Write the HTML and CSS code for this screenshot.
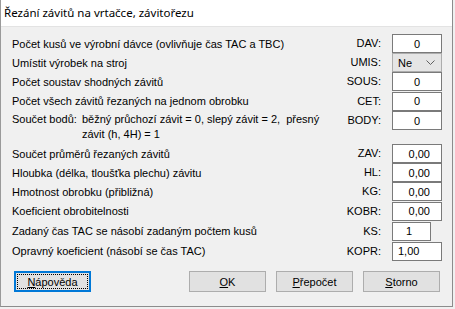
FILE: index.html
```html
<!DOCTYPE html>
<html lang="cs">
<head>
  <meta charset="UTF-8">
  <title>Řezání závitů na vrtačce, závitořezu</title>
  <link rel="stylesheet" href="styles.css">
</head>
<body>
  <div class="window">
    <div class="titlebar">Řezání závitů na vrtačce, závitořezu</div>
    <div class="client">
      <div class="form">
        <div class="row h19">
          <span class="label">Počet kusů ve výrobní dávce (ovlivňuje čas TAC a TBC)</span>
          <span class="code">DAV:</span>
          <input class="box center" value="0">
        </div>
        <div class="row h19">
          <span class="label">Umístit výrobek na stroj</span>
          <span class="code">UMIS:</span>
          <div class="select">
            <span>Ne</span>
            <svg width="9" height="5" viewBox="0 0 9 5"><polyline points="0.5,0.5 4.5,4.5 8.5,0.5" fill="none" stroke="#606060" stroke-width="1"/></svg>
          </div>
        </div>
        <div class="row h19">
          <span class="label">Počet soustav shodných závitů</span>
          <span class="code">SOUS:</span>
          <input class="box center" value="0">
        </div>
        <div class="row h20">
          <span class="label">Počet všech závitů řezaných na jednom obrobku</span>
          <span class="code">CET:</span>
          <input class="box center" value="0">
        </div>
        <div class="row tall">
          <span class="label split">
            <span class="lead">Součet bodů:</span>
            <span class="desc">běžný průchozí závit = 0, slepý závit = 2,&nbsp; přesný<br>závit (h, 4H) = 1</span>
          </span>
          <span class="code">BODY:</span>
          <input class="box center" value="0">
        </div>
        <div class="row h19">
          <span class="label">Součet průměrů řezaných závitů</span>
          <span class="code">ZAV:</span>
          <input class="box num" value="0,00">
        </div>
        <div class="row h19">
          <span class="label">Hloubka (délka, tloušťka plechu) závitu</span>
          <span class="code">HL:</span>
          <input class="box num" value="0,00">
        </div>
        <div class="row h19">
          <span class="label">Hmotnost obrobku (přibližná)</span>
          <span class="code">KG:</span>
          <input class="box num" value="0,00">
        </div>
        <div class="row h20">
          <span class="label">Koeficient obrobitelnosti</span>
          <span class="code">KOBR:</span>
          <input class="box num" value="0,00">
        </div>
        <div class="row h20">
          <span class="label">Zadaný čas TAC se násobí zadaným počtem kusů</span>
          <span class="code">KS:</span>
          <div class="field-slot"><input class="box short" value="1"></div>
        </div>
        <div class="row h20">
          <span class="label">Opravný koeficient (násobí se čas TAC)</span>
          <span class="code">KOPR:</span>
          <input class="box left" value="1,00">
        </div>
      </div>
      <div class="buttons">
        <button class="btn focused"><span class="focus-rect"><u>N</u>ápověda</span></button>
        <div class="btn-group">
          <button class="btn"><u>O</u>K</button>
          <button class="btn"><u>P</u>řepočet</button>
          <button class="btn"><u>S</u>torno</button>
        </div>
      </div>
    </div>
  </div>
</body>
</html>
```

FILE: styles.css
```css
* { box-sizing: border-box; margin: 0; padding: 0; }
body {
  width: 455px; height: 309px;
  background: #f0f0f0;
  font-family: 'Liberation Sans', Arial, sans-serif;
  font-size: 11px;
  color: #000;
  overflow: hidden;
}
.window {
  width: 453px; height: 307px;
  border-left: 1px solid #9a9a9a;
  border-right: 1px solid #8c8c8c;
  border-bottom: 1px solid #8c8c8c;
  display: flex; flex-direction: column;
}
.titlebar {
  height: 27px;
  background: #fff;
  border-bottom: 1px solid #e3e3e3;
  padding-left: 3px;
  font-family: 'Noto Sans', sans-serif;
  font-size: 11.5px;
  line-height: 26px;
}
.client {
  flex: 1;
  background: #f0f0f0;
  padding: 7px 10px 0 11px;
}
.row {
  display: flex; align-items: center;
}
.h19 { height: 19px; }
.h20 { height: 20px; }
.tall { height: 33px; align-items: flex-start; }
.label { flex: 1; white-space: nowrap; }
.split { display: flex; padding-top: 1px; line-height: 15px; }
.lead { width: 70px; }
.code {
  width: 60px;
  text-align: right;
  padding-right: 11px;
  line-height: 19px;
}
.box, .select, .field-slot { width: 50px; height: 19px; }
.box {
  border: 1px solid #7a7a7a;
  background: #fff;
  font-family: inherit; font-size: 11px;
  color: #000;
  outline: none;
}
.center { text-align: center; }
.num { text-align: right; padding-right: 11px; }
.left { text-align: left; padding-left: 5px; }
.short { width: 39px; text-align: left; padding-left: 13px; }
.select {
  border: 1px solid #adadad;
  background: #e5e5e5;
  display: flex; align-items: center; justify-content: space-between;
  padding: 0 6px 0 5px;
}
.buttons {
  margin-top: 10px;
  display: flex; justify-content: space-between;
  padding: 0 2px 0 2px;
}
.btn-group { display: flex; gap: 10px; }
.btn {
  width: 77px; height: 21px;
  border: 1px solid #adadad;
  background: #e1e1e1;
  font-family: inherit; font-size: 11px;
  color: #000;
}
.btn u { text-decoration: underline; }
.focused {
  border: 2px solid #0078d7;
  padding: 1px;
}
.focus-rect {
  display: flex; align-items: center; justify-content: center;
  height: 100%;
  border: 1px dotted #000;
}
```
